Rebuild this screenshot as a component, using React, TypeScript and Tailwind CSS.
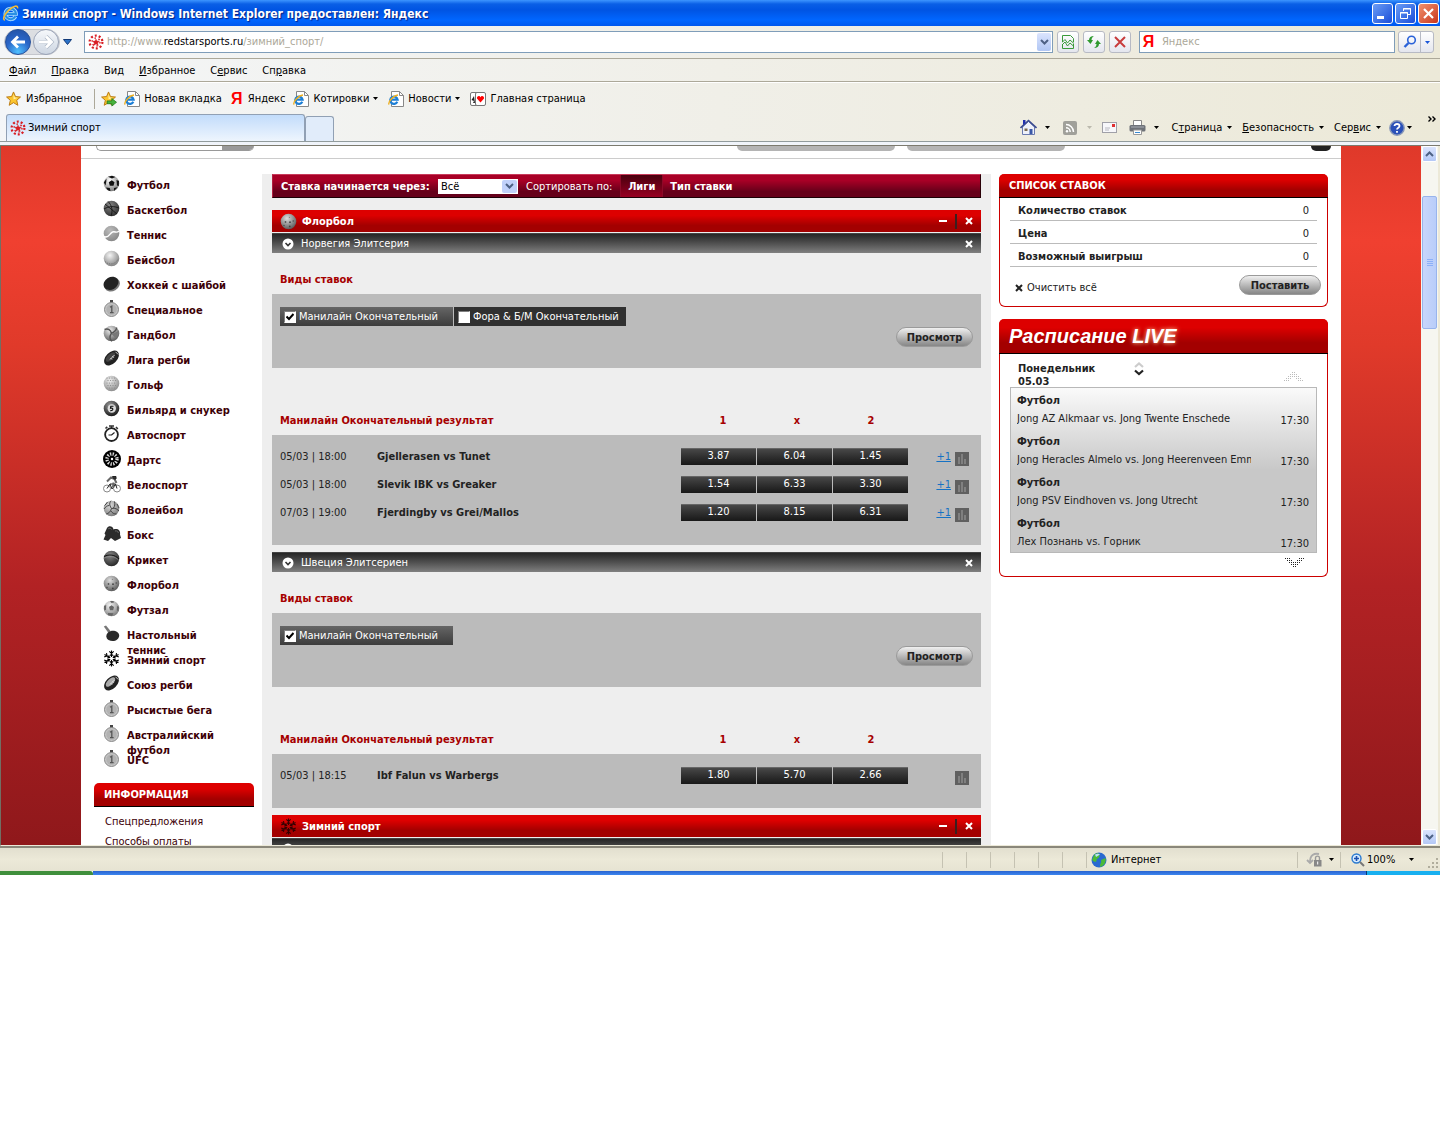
import React from "react";

const gid = (() => {
  let n = 0;
  return () => `g${n++}`;
})();

function Ball({ light, dark, children }: { light: string; dark: string; children?: React.ReactNode }) {
  const id = gid();
  return (
    <svg viewBox="0 0 17 17" className="size-[17px] shrink-0" aria-hidden="true">
      <defs>
        <radialGradient id={id} cx="0.4" cy="0.3" r="0.75">
          <stop offset="0" stopColor={light} />
          <stop offset="1" stopColor={dark} />
        </radialGradient>
      </defs>
      <circle cx="8.5" cy="8.5" r="7.8" fill={`url(#${id})`} />
      {children}
    </svg>
  );
}

function Medal() {
  return (
    <svg viewBox="0 0 17 17" className="size-[17px] shrink-0" aria-hidden="true">
      <rect x="7" y="0" width="3" height="4" fill="#444" />
      <circle cx="8.5" cy="9.5" r="7" fill="#c4c4c4" stroke="#8a8a8a" />
      <circle cx="8.5" cy="9.5" r="5.2" fill="#b2b2b2" />
      <path d="M7 7.2 L8.8 6.2 V12.5 M7 12.6 H10.6" stroke="#555" strokeWidth="1.3" fill="none" />
    </svg>
  );
}

function Snow({ color = "#000" }: { color?: string }) {
  return (
    <svg viewBox="0 0 17 17" className="size-[17px] shrink-0" aria-hidden="true" stroke={color} strokeWidth="1.1" fill="none">
      {[0, 60, 120, 180, 240, 300].map((a) => (
        <path key={a} transform={`rotate(${a} 8.5 8.5)`} d="M8.5 7 V0.4 M6.3 1.4 L8.5 3.4 L10.7 1.4 M7 4.6 L8.5 6 L10 4.6" />
      ))}
    </svg>
  );
}

function Rugby({ light }: { light: string }) {
  return (
    <svg viewBox="0 0 17 17" className="size-[17px] shrink-0" aria-hidden="true">
      <ellipse cx="8.5" cy="8" rx="8.8" ry="5.6" transform="rotate(-45 8.5 8)" fill="#222" />
      <ellipse cx="7.5" cy="7" rx="6" ry="3" transform="rotate(-45 7.5 7)" fill={light} />
      <path d="M7 9.5 L11.5 5 M7.5 8 L9 9.5 M9.3 6.2 L10.8 7.7 M12.5 1.8 L15.2 4.500" stroke="#ddd" strokeWidth="0.9" />
    </svg>
  );
}

function SportIcon({ kind }: { kind: string }) {
  switch (kind) {
    case "football":
      return (
        <Ball light="#fff" dark="#777">
          <path d="M5.800 7.200 L8.800 5.200 L11.500 7.300 L10.500 10.700 H6.800 Z M0.800 7.500 L3.500 3.500 L3.300 6.500 L2.500 10.500 Z M5 1.800 L9 0.700 L12.500 2 L9 3.400 Z M16 6 L13.500 5 L14 10.500 L15.800 11 Z M3 12.500 L6.800 13 L7.500 16.200 L4.600 15 Z M11 13 L14.500 12.300 L11 16 Z" fill="#111" />
        </Ball>
      );
    case "basketball":
      return (
        <Ball light="#888" dark="#2a2a2a">
          <path d="M2 4 L14 14 M5 1.5 C9 5 10 11 8 16 M1 9 C6 6 11 6 16 8" stroke="#151515" strokeWidth="0.9" fill="none" />
        </Ball>
      );
    case "tennis":
      return (
        <Ball light="#bbb" dark="#858585">
          <path d="M1 11.5 C6 14 6.5 8 9.5 7 C12 6 13.5 8.5 16 6" stroke="#fff" strokeWidth="1.4" fill="none" />
        </Ball>
      );
    case "baseball":
      return (
        <Ball light="#f4f4f4" dark="#7c7c7c">
          <path d="M2 11.5 C6 15.5 12 14.5 15 9.5" stroke="#777" strokeDasharray="1.3 1" fill="none" />
        </Ball>
      );
    case "puck":
      return (
        <svg viewBox="0 0 17 17" className="size-[17px] shrink-0" aria-hidden="true">
          <ellipse cx="9" cy="9.5" rx="8.2" ry="6.6" transform="rotate(-30 9 9.5)" fill="#777" />
          <ellipse cx="8" cy="8.3" rx="7.8" ry="6.2" transform="rotate(-30 8 8.3)" fill="#222" />
        </svg>
      );
    case "medal":
      return <Medal />;
    case "handball":
      return (
        <Ball light="#eee" dark="#555">
          <path d="M1.5 4.5 C5 3 8 5 8.3 8.5 C12 7 14 4 13.5 2.5 M8.3 8.5 C6 12 7 15 9 16.2" stroke="#555" strokeWidth="1.4" fill="none" />
          <path d="M8.5 9 L15.5 6 L13 13.5 Z" fill="#777" />
        </Ball>
      );
    case "rugby":
      return <Rugby light="#444" />;
    case "union":
      return <Rugby light="#aaa" />;
    case "golf":
      return (
        <Ball light="#eee" dark="#888">
          {[3, 5.5, 8, 10.5, 13].map((y, i) =>
            [4, 6.5, 9, 11.5].map((x) => <circle key={`${x}-${y}`} cx={x + (i % 2)} cy={y} r="0.6" fill="#8a8a8a" />)
          )}
        </Ball>
      );
    case "billiard":
      return (
        <Ball light="#999" dark="#111">
          <circle cx="8.8" cy="8.5" r="4.2" fill="#ddd" />
          <path d="M10.5 6.3 H7.8 L7.5 8.2 C10.5 7.5 10.8 11 7.3 10.6" stroke="#111" strokeWidth="1.1" fill="none" />
        </Ball>
      );
    case "watch":
      return (
        <svg viewBox="0 0 17 17" className="size-[17px] shrink-0" aria-hidden="true">
          <path d="M6 1 H11 M8.5 1 V3 M2.5 3.5 L4.3 1.8 M13 2 L14.8 4" stroke="#333" strokeWidth="1.6" />
          <circle cx="8.5" cy="9.6" r="6.4" fill="#fff" stroke="#222" strokeWidth="1.8" />
          <path d="M8.5 10 L11.5 7.5 M5.5 10 H8.5" stroke="#222" strokeWidth="1.1" />
        </svg>
      );
    case "darts":
      return (
        <svg viewBox="0 0 18 18" className="size-[18px] shrink-0" aria-hidden="true">
          <circle cx="9" cy="9" r="9" fill="#000" />
          <circle cx="9" cy="9" r="5" fill="none" stroke="#ddd" strokeWidth="3.400" strokeDasharray="1.300 1.320" />
          <circle cx="9" cy="9" r="1.2" fill="#fff" />
        </svg>
      );
    case "cycling":
      return (
        <svg viewBox="0 0 18 18" className="size-[18px] shrink-0" aria-hidden="true" fill="none" stroke="#222">
          <circle cx="4" cy="13.5" r="3.5" stroke="#888" />
          <circle cx="14" cy="13.5" r="3.5" stroke="#888" />
          <path d="M4 13.5 L7 9 H12.5 L14 13.5 M7 9 L9 14 L12.5 9" />
          <path d="M4 6.500 L8 2.500 L11.500 4 L13.500 8 M10.500 7.500 L10 12" stroke="#666" strokeWidth="2" />
          <path d="M9.500 1.500 H13 V4 H11 Z" fill="#333" />
        </svg>
      );
    case "volleyball":
      return (
        <Ball light="#ddd" dark="#777">
          <path d="M8.5 8.5 C6 5 6.5 2.5 8 0.8 M6.3 5.5 C4 5.5 2.5 7 1 9 M8.5 8.5 C12.5 7.5 14.5 9.5 16 11 M10.5 8 C12 6 12 4 11.5 1.5 M8.5 8.5 C7.5 12 5.5 13.5 3.2 14 M7.8 10.8 C9 13 11 14 13.5 14 M4.5 2 C3.5 3.5 2.8 4.5 1.5 5.5 M14 4 C15 6 15.5 7 16 8" stroke="#444" strokeWidth="1" fill="none" />
        </Ball>
      );
    case "boxing":
      return (
        <svg viewBox="0 0 18 17" className="size-[18px] shrink-0" aria-hidden="true">
          <path d="M4 2.500 C6 -0.5 10 1 10.5 4 C14 2.5 18 4.500 17 9 L18 12.500 L12 15.5 L8 12.5 L5 15.500 L0.500 14 L2.500 9.500 L1.500 8 Z" fill="#2b2b2b" />
          <path d="M5 3.500 C6 2.500 8 2.5 8.5 4 M12 5.5 C14 5 15.300 6 15.3 7.500" stroke="#666" fill="none" />
        </svg>
      );
    case "cricket":
      return (
        <Ball light="#888" dark="#222">
          <path d="M1 6.5 C6 4 12 4.5 16 9" stroke="#111" fill="none" />
          <path d="M1 8.2 C6 5.5 12 6 15.8 10.5" stroke="#999" strokeWidth="0.6" fill="none" />
        </Ball>
      );
    case "floorball":
      return (
        <Ball light="#ddd" dark="#555">
          <circle cx="5.5" cy="9" r="0.9" fill="#555" />
          <circle cx="10" cy="9.2" r="0.9" fill="#444" />
          <circle cx="13.2" cy="8" r="0.7" fill="#444" />
          <circle cx="9.5" cy="4.4" r="0.7" fill="#888" />
          <circle cx="4" cy="12.5" r="0.7" fill="#444" />
          <circle cx="9.8" cy="13.4" r="0.9" fill="#444" />
        </Ball>
      );
    case "futsal":
      return (
        <Ball light="#f5f5f5" dark="#777">
          <path d="M6 7 L8.5 5.3 L11 7 L10.2 10.2 H7 Z M1 6 L3.2 5 L3 9.8 L1.2 10.5 Z M7 1 L10.5 1 L11 2.5 L8.5 3 Z M16 7 L14 6 L13.8 10 L15.4 11.5 Z M5 13 L10.5 13.3 L9 16 L5 15 Z" fill="#666" />
        </Ball>
      );
    case "pingpong":
      return (
        <svg viewBox="0 0 17 17" className="size-[17px] shrink-0" aria-hidden="true">
          <path d="M0.8 1.5 L3 0.5 L7.5 6 L5.5 8 Z" fill="#777" />
          <path d="M5 7.5 C9 4 16 6 16.2 10.5 C16 15.5 10 17.5 5.5 15 C3 13.5 2.5 10 5 7.5 Z" fill="#2a2a2a" />
        </svg>
      );
    default:
      return <Snow />;
  }
}

const sports: [string, string][] = [
  ["Футбол", "football"],
  ["Баскетбол", "basketball"],
  ["Теннис", "tennis"],
  ["Бейсбол", "baseball"],
  ["Хоккей с шайбой", "puck"],
  ["Специальное", "medal"],
  ["Гандбол", "handball"],
  ["Лига регби", "rugby"],
  ["Гольф", "golf"],
  ["Бильярд и снукер", "billiard"],
  ["Автоспорт", "watch"],
  ["Дартс", "darts"],
  ["Велоспорт", "cycling"],
  ["Волейбол", "volleyball"],
  ["Бокс", "boxing"],
  ["Крикет", "cricket"],
  ["Флорбол", "floorball"],
  ["Футзал", "futsal"],
  ["Настольный теннис", "pingpong"],
  ["Зимний спорт", "snow"],
  ["Союз регби", "union"],
  ["Рысистые бега", "medal"],
  ["Австралийский футбол", "medal"],
  ["UFC", "medal"],
];

/* ---------- browser chrome ---------- */

function Caret({ className = "text-black" }: { className?: string }) {
  return (
    <svg viewBox="0 0 5 3" className={`h-[3px] w-[5px] shrink-0 ${className}`} aria-hidden="true">
      <path d="M0 0 H5 L2.5 3 Z" fill="currentColor" />
    </svg>
  );
}

function StarMark() {
  return (
    <svg viewBox="0 0 16 16" className="size-4 shrink-0" aria-hidden="true" fill="none" stroke="#d81e24">
      <circle cx="8" cy="8" r="6.4" strokeWidth="2.2" strokeDasharray="2 2.020" />
      <circle cx="8" cy="8" r="4" strokeWidth="1.4" strokeDasharray="1.5 2.7" />
      <path d="M8 5 L9 7 L11.500 7.200 L9.7 9 L10.300 11.500 L8 10 L5.700 11.500 L6.300 9 L4.500 7.200 L7 7 Z" fill="#d81e24" strokeWidth="0.3" />
    </svg>
  );
}

function IeGlyph({ className = "size-[18px]" }: { className?: string }) {
  return (
    <svg viewBox="0 0 18 18" className={`shrink-0 ${className}`} aria-hidden="true" fill="none">
      <path d="M14.2 12 A5.6 5.6 0 1 1 14.8 9.4 H4.5" stroke="#a8dcff" strokeWidth="4" />
      <path d="M14.2 12 A5.6 5.6 0 1 1 14.8 9.4 H4.5" stroke="#2a90e4" strokeWidth="2.2" />
      <path d="M3 16.2 C0 15 3 9.5 7.5 5.2 C12 1 17 -0.5 16.5 3.5" stroke="#f3bb35" strokeWidth="1.7" />
    </svg>
  );
}

function IePage() {
  return (
    <svg viewBox="0 0 16 16" className="size-4 shrink-0" aria-hidden="true" fill="none">
      <path d="M3.5 0.5 H11.5 L15.5 4.5 V15.5 H3.5 Z" fill="#fff" stroke="#888" />
      <path d="M11.5 0.5 V4.5 H15.5" stroke="#888" />
      <path d="M9.3 10.8 A3.7 3.7 0 1 1 9.6 8.6 H3" stroke="#1d7fd6" strokeWidth="2.2" />
      <path d="M1.2 13.5 C-0.5 11.5 5 4.5 10 4" stroke="#f0b020" strokeWidth="1.4" />
    </svg>
  );
}

function GoldStar({ arrow }: { arrow?: boolean }) {
  return (
    <svg viewBox="0 0 17 17" className="size-4 shrink-0" aria-hidden="true">
      <path d="M8 1 L10.1 5.9 L15.4 6.4 L11.4 9.9 L12.6 15.2 L8 12.4 L3.4 15.2 L4.6 9.9 L0.6 6.4 L5.9 5.9 Z" fill="#fbc52f" stroke="#b9780f" />
      <path d="M8 3 L9.3 6.8 L12.5 7.2 L8 9 Z" fill="#fff0a8" />
      {arrow && <path d="M6.5 10.5 H11.5 V8 L16.5 12 L11.5 16 V13.5 H6.5 Z" fill="#46b23c" stroke="#1c7a1c" strokeWidth="0.8" />}
    </svg>
  );
}

function Ya() {
  return <span aria-hidden="true" className="inline-block w-[14px] text-center font-['Liberation_Sans',sans-serif] text-base leading-4 font-bold text-[#f00]">Я</span>;
}

const iconBtn = "flex size-[22px] shrink-0 items-center justify-center rounded-[3px] border border-[#b7bac4] bg-linear-to-b from-white to-[#e4e6ee]";

function TitleBar() {
  const box = "flex size-[21px] items-center justify-center rounded-[3px] border border-white";
  return (
    <header className="flex h-[26px] items-center bg-[linear-gradient(#3d95ff_0,#0a5fe6_4px,#0054e3_10px,#0066ff_20px,#0058ee_100%)] pr-px pl-0.5">
      <IeGlyph className="size-[17px]" />
      <h1 className="ml-[3px] flex-1 pt-0.5 font-['DejaVu_Sans_Condensed',sans-serif] text-[12px] font-bold whitespace-nowrap text-white [text-shadow:1px_1px_1px_#0a1f80]">
        Зимний спорт - Windows Internet Explorer предоставлен: Яндекс
      </h1>
      <div className="flex gap-0.5">
        <button aria-label="Свернуть" className={`${box} bg-linear-to-br from-[#6b9cf5] to-[#1c4bd8]`}>
          <svg viewBox="0 0 19 19" className="size-[19px]"><path d="M4 12 H11 V15 H4 Z" fill="#fff" /></svg>
        </button>
        <button aria-label="Развернуть" className={`${box} bg-linear-to-br from-[#6b9cf5] to-[#1c4bd8]`}>
          <svg viewBox="0 0 19 19" className="size-[19px]" fill="none" stroke="#fff"><path d="M7.5 7 V4.5 H14.5 V10.5 H12 M7 5 H15 M4.5 8.5 H11.5 V14.5 H4.5 Z M4 9 H12" /></svg>
        </button>
        <button aria-label="Закрыть" className={`${box} bg-linear-to-br from-[#f0906c] to-[#c8321a]`}>
          <svg viewBox="0 0 19 19" className="size-[19px]" stroke="#fff" strokeWidth="2.2"><path d="M5 5 L14 14 M14 5 L5 14" /></svg>
        </button>
      </div>
    </header>
  );
}

function AddressBar() {
  return (
    <div className="flex h-[33px] items-center border-b border-[#aca899] pr-1.5 pl-1">
      <div className="flex h-[26px] w-[56px] shrink-0 items-center rounded-full border border-[#c4c6cc] bg-[#dcdee2]">
        <button aria-label="Назад" className="flex size-[26px] items-center justify-center rounded-full border border-[#24509c] bg-[radial-gradient(circle_at_50%_90%,#4fc0ff,#2a66c8_50%,#2450a0)]">
          <svg viewBox="0 0 18 18" className="size-[18px]" stroke="#fff" strokeWidth="2.8" fill="none"><path d="M16 9 H4 M9 3.5 L3.5 9 L9 14.5" /></svg>
        </button>
        <button aria-label="Вперёд" className="ml-0.5 flex size-[26px] items-center justify-center rounded-full border border-[#9aa4b8] bg-linear-to-b from-[#f6f8fb] to-[#cdd6e2]">
          <svg viewBox="0 0 18 18" className="size-[18px]" stroke="#fff" strokeWidth="2.8" fill="none"><path d="M2 9 H14 M9 3.5 L14.5 9 L9 14.5" stroke="#a9b4c4" strokeWidth="4" /><path d="M2 9 H14 M9 3.5 L14.5 9 L9 14.5" /></svg>
        </button>
      </div>
      <button aria-label="Последние страницы" className="ml-[3px] w-[9px]">
        <svg viewBox="0 0 9 6" className="h-1.5 w-[9px]"><path d="M0.5 0.5 H8.5 L4.5 5.5 Z" fill="#2a72c8" stroke="#123a78" /></svg>
      </button>
      <div className="ml-3 flex h-[22px] flex-1 items-center border border-[#7f9db9] bg-white pr-px pl-[3px]">
        <StarMark />
        <div role="textbox" aria-label="Адрес" className="ml-[3px] flex-1 text-[#aca899]">
          http://www.<span className="text-black">redstarsports.ru</span>/зимний_спорт/
        </div>
        <button aria-label="Показать адреса" className="flex h-[18px] w-[14px] items-center justify-center rounded-[2px] bg-linear-to-b from-[#dbe4fd] to-[#b0c6f4]">
          <svg viewBox="0 0 9 6" className="h-1.5 w-[9px]" fill="none" stroke="#4d6185" strokeWidth="2"><path d="M1 1 L4.5 4.5 L8 1" /></svg>
        </button>
      </div>
      <div className="ml-1 flex gap-1">
        <button aria-label="Просмотр совместимости" className={iconBtn}>
          <svg viewBox="0 0 12 14" className="h-[14px] w-3" fill="none" stroke="#3a9a3a"><path d="M0.5 7 V0.5 H8.5 L11.5 3.5 V7 M0.5 9 V13.5 H11.5 V9 M0 7.5 L3 4.5 L5.5 8 L8 5 L12 8.5 M0 10 L3 7 L5.5 11 L8 8 L12 11.5" /></svg>
        </button>
        <button aria-label="Обновить" className={iconBtn}>
          <svg viewBox="0 0 14 12" className="h-3 w-[14px]" fill="#2f9a2f"><path d="M0 4 L3.5 8 L6 4 H4.5 C4.5 2 5.5 1 7 0 C4 0 2 1.5 2 4 Z" /><path d="M14 8 L10.5 4 L8 8 H9.5 C9.5 10 8.5 11 7 12 C10 12 12 10.500 12 8 Z" /></svg>
        </button>
        <button aria-label="Остановить" className={iconBtn}>
          <svg viewBox="0 0 12 12" className="size-3" stroke="#c83c3c" strokeWidth="2"><path d="M1 1 L11 11 M11 1 L1 11" /></svg>
        </button>
      </div>
      <label className="ml-2 flex h-[22px] w-[256px] items-center border border-[#7f9db9] bg-white pl-0.5">
        <Ya />
        <input aria-label="Поиск" placeholder="Яндекс" className="ml-[7px] w-full bg-transparent outline-none placeholder:text-[#aca899]" />
      </label>
      <div className="ml-[3px] flex h-[22px] w-9 rounded-[3px] border border-[#b7bac4] bg-linear-to-b from-white to-[#e4e6ee]">
        <button aria-label="Найти" className="flex flex-1 items-center justify-center border-r border-[#b7bac4]">
          <svg viewBox="0 0 14 14" className="size-[14px]" fill="none" stroke="#2a62d8"><circle cx="8.500" cy="5" r="3.800" strokeWidth="1.600" /><path d="M5.500 8 L1.500 12" strokeWidth="2.400" /></svg>
        </button>
        <button aria-label="Варианты поиска" className="flex w-3 items-center justify-center"><Caret className="text-[#1a56d8]" /></button>
      </div>
    </div>
  );
}

const menus: [string, string, string][] = [
  ["", "Ф", "айл"],
  ["", "П", "равка"],
  ["Ви", "д", ""],
  ["", "И", "збранное"],
  ["С", "е", "рвис"],
  ["Сп", "р", "авка"],
];

function U({ parts }: { parts: [string, string, string] }) {
  return (
    <span className="whitespace-nowrap">
      {parts[0]}
      <span className="underline">{parts[1]}</span>
      {parts[2]}
    </span>
  );
}

function FavoritesBar() {
  const item = "flex items-center gap-1 whitespace-nowrap";
  return (
    <div className="flex h-8 items-center border-t border-white pl-1.5">
      <button className={item}><GoldStar />Избранное</button>
      <div className="ml-3 h-[20px] w-px bg-[#aca899]" />
      <button aria-label="Добавить в избранное" className="ml-1.5"><GoldStar arrow /></button>
      <div className="ml-[7px] flex items-center gap-2">
        <a href="#new" className={item}><IePage />Новая вкладка</a>
        <a href="#ya" className={item}><Ya />Яндекс</a>
        <button className={`${item} mr-0.5`}><IePage />Котировки<Caret /></button>
        <button className={`${item} mr-0.5`}><IePage />Новости<Caret /></button>
        <a href="#home" className={item}>
          <svg viewBox="0 0 16 14" className="h-[14px] w-4" aria-hidden="true">
            <rect x="0.500" y="0.500" width="9" height="13" rx="1.500" fill="#fff" stroke="#777" />
            <path d="M4 4 L1.500 8 L4 9 L3 11 H5 Z" fill="#222" />
            <rect x="5.500" y="0.500" width="10" height="13" rx="1.500" fill="#fff" stroke="#777" />
            <path d="M10.500 10.500 L7 6.500 C6.500 4 9.500 3 10.500 5.200 C11.500 3 14.500 4 14 6.500 Z" fill="#f00" />
          </svg>
          Главная страница
        </a>
      </div>
    </div>
  );
}

function TabRow() {
  return (
    <div className="flex h-7 items-end border-b border-[#919b9c] pr-1 pl-1.5">
      <button className="flex h-[27px] w-[299px] items-center gap-0.5 rounded-t-[3px] border border-b-0 border-[#91a0b4] bg-linear-to-b from-[#c2dcfb] to-[#eef5fd] pl-[3px] text-left">
        <StarMark />Зимний спорт
      </button>
      <button aria-label="Новая вкладка" className="h-[25px] w-[29px] rounded-t-[3px] border border-b-0 border-[#91a0b4] bg-[#e1ecfa]" />
      <div className="ml-auto flex h-[27px] items-center">
        <button aria-label="Домашняя страница" className="flex items-center gap-2">
          <svg viewBox="0 0 17 17" className="size-[17px]" fill="none"><path d="M2.500 8 V15.500 H14.500 V8 L8.500 2.500 Z" fill="#eef1fa" stroke="#6a7ab0" /><path d="M0.500 9 L8.500 1.500 L16.500 9" stroke="#3a4a90" strokeWidth="1.600" /><path d="M3 1 H5.500 V4 L3 6 Z" fill="#2030b0" /><path d="M9.500 10 H12.500 V15 H9.500 Z" fill="#3a58a8" /><path d="M4.500 9.500 H7.500 V12 H4.500 Z" fill="#7a6a50" /></svg>
          <Caret />
        </button>
        <button aria-label="Веб-каналы" className="ml-[13px] flex items-center gap-2.5">
          <svg viewBox="0 0 14 14" className="size-[14px]" fill="none"><rect width="14" height="14" rx="2" fill="#a0a09a" /><path d="M3 3.500 A7.500 7.500 0 0 1 10.500 11 M3 6.800 A4.200 4.200 0 0 1 7.200 11" stroke="#fff" strokeWidth="1.500" /><circle cx="4" cy="10.200" r="1.200" fill="#fff" /></svg>
          <Caret className="text-[#bbb9ad]" />
        </button>
        <button aria-label="Почта" className="ml-2.5">
          <svg viewBox="0 0 15 11" className="h-[11px] w-[15px]"><rect x="0.500" y="0.500" width="14" height="10" fill="#f7f7fa" stroke="#a0a0a8" /><path d="M10 2 H13 V5 H10 Z" fill="#e03030" /><path d="M3 6 H8 M3 8 H7" stroke="#b8b8c0" /></svg>
        </button>
        <button aria-label="Печать" className="ml-3 flex items-center gap-2">
          <svg viewBox="0 0 17 15" className="h-[15px] w-[17px]"><path d="M4.500 0.500 H12.500 V6 H4.500 Z" fill="#fff" stroke="#888" /><rect x="0.500" y="5" width="16" height="6.500" rx="1.500" fill="#6e7278" /><path d="M2 7 H15" stroke="#a8acb4" /><path d="M4.500 10 H12.500 V14.500 H4.500 Z" fill="#fff" stroke="#999" /><path d="M6 12.500 H11" stroke="#3a8ad0" /></svg>
          <Caret />
        </button>
        <button className="ml-3 flex items-center gap-[5px]"><U parts={["С", "т", "раница"]} /><Caret /></button>
        <button className="ml-2.5 flex items-center gap-[5px]"><U parts={["", "Б", "езопасность"]} /><Caret /></button>
        <button className="ml-2.5 flex items-center gap-[5px]"><U parts={["Сер", "в", "ис"]} /><Caret /></button>
        <button aria-label="Справка" className="ml-2 flex items-center gap-0.5">
          <svg viewBox="0 0 16 16" className="size-4" fill="none"><circle cx="8" cy="8" r="7.200" fill="#2a50b8" stroke="#8898b8" strokeWidth="1.400" /><path d="M5.500 6 C5.500 3.300 10.500 3.300 10.500 6 C10.500 7.800 8 7.600 8 9.600 M8 11 V12.800" stroke="#fff" strokeWidth="1.800" /></svg>
          <Caret />
        </button>
        <button aria-label="Ещё" className="ml-4 flex self-start pt-0.5">
          <svg viewBox="0 0 8 6" className="h-1.5 w-2" fill="none" stroke="#000" strokeWidth="1.400"><path d="M0.500 0.500 L3 3 L0.500 5.500 M4.500 0.500 L7 3 L4.500 5.500" /></svg>
        </button>
      </div>
    </div>
  );
}

/* ---------- page ---------- */

const redHead = "bg-[linear-gradient(#dd0000_25%,#a30000_70%)]";

function CloseX({ color = "#fff" }: { color?: string }) {
  return (
    <svg viewBox="0 0 8 8" className="size-2" aria-hidden="true" stroke={color} strokeWidth="2"><path d="M1 1 L7 7 M7 1 L1 7" /></svg>
  );
}

function Pill({ children, className }: { children: string; className: string }) {
  return (
    <button className={`h-5 rounded-full border border-[#9a9a9a] bg-linear-to-b from-[#f0f0f0] to-[#868686] pt-0.5 text-center leading-4 font-bold text-[#222] ${className}`}>
      {children}
    </button>
  );
}

function SportHeader({ icon, name }: { icon: React.ReactNode; name: string }) {
  return (
    <div className={`flex h-[22px] items-center pr-2 pl-2 text-white ${redHead}`}>
      {icon}
      <h2 className="ml-[5px] flex-1 pt-0.5 font-bold">{name}</h2>
      <button aria-label={`Свернуть ${name}`} className="h-0.5 w-2 bg-white" />
      <div className="mx-2 h-[15px] w-0.5 bg-[#3a2020]" />
      <button aria-label={`Закрыть ${name}`}><CloseX /></button>
    </div>
  );
}

function LeagueHeader({ name }: { name?: string }) {
  return (
    <div className="flex h-5 items-center border-t border-[#444] bg-linear-to-b from-[#262626] to-[#808080] px-2 text-white">
      <svg viewBox="0 0 16 16" className="size-4" aria-hidden="true"><circle cx="8" cy="8" r="5.500" fill="#fff" /><path d="M5.500 7 L8 9.500 L10.500 7" stroke="#333" strokeWidth="1.600" fill="none" /></svg>
      <h3 className="ml-[5px] flex-1 pt-px">{name}</h3>
      <button aria-label={`Закрыть ${name ?? "лигу"}`}><CloseX /></button>
    </div>
  );
}

function Chip({ label, checked, className }: { label: string; checked?: boolean; className: string }) {
  return (
    <label className={`flex h-[19px] items-center gap-[3px] pl-1 whitespace-nowrap text-white ${className}`}>
      <span className="relative grid size-3 place-items-center">
        <input type="checkbox" defaultChecked={checked} className="peer size-3 appearance-none border border-[#808080] border-r-white border-b-white bg-white" />
        <svg viewBox="0 0 8 8" className="pointer-events-none absolute size-2 opacity-0 peer-checked:opacity-100" fill="none" stroke="#000" strokeWidth="2"><path d="M0.500 3.500 L3 6 L7.500 1" /></svg>
      </span>
      {label}
    </label>
  );
}

type Match = { date: string; name: string; odds: string[]; more?: boolean };

function League({ name, types, matches }: { name: string; types: string[]; matches: Match[] }) {
  return (
    <section>
      <LeagueHeader name={name} />
      <h4 className="h-[41px] pt-[19px] pl-2 leading-4 font-bold text-[#a60000]">Виды ставок</h4>
      <div className="h-[74px] bg-[#bbb] px-2 pt-[13px]">
        <div className="flex gap-px">
          {types.map((t, i) => (
            <Chip key={t} label={t} checked={i === 0} className={i === 0 ? "w-[173px] bg-linear-to-b from-[#666] to-[#3c3c3c]" : "w-[172px] bg-[#303030]"} />
          ))}
        </div>
        <div className="mt-px flex justify-end">
          <Pill className="w-[77px]">Просмотр</Pill>
        </div>
      </div>
      <div className="flex h-[67px] items-end pr-[73px] pb-1.5 pl-2 leading-4 font-bold text-[#a60000]">
        <h4 className="flex-1">Манилайн Окончательный результат</h4>
        <span className="w-[74px] text-center">1</span>
        <span className="w-[74px] text-center">x</span>
        <span className="w-[74px] text-center">2</span>
      </div>
      <div className="mb-[7px] bg-[#bbb] py-[13px] pl-2">
        <table className="w-full table-fixed border-collapse" aria-label={name}>
          <tbody>
            {matches.map((m) => (
              <tr key={m.name} className="h-7 align-top">
                <td className="w-[97px] px-0 pt-px pb-0 leading-4">{m.date}</td>
                <th scope="row" className="px-0 pt-px pb-0 text-left leading-4 font-bold">{m.name}</th>
                {m.odds.map((o) => (
                  <td key={o} className="w-[76px] p-0">
                    <button className="block h-[17px] w-[calc(100%-1px)] border-t border-[#666] bg-linear-to-b from-[#484848] to-[#181818] pb-0.5 text-center leading-[14px] text-white">{o}</button>
                  </td>
                ))}
                <td className="w-[72px] p-0">
                  <div className="flex items-start justify-end gap-1 pr-3">
                    {m.more && <a href="#more" className="pt-px leading-4 text-[#1672c4] underline">+1</a>}
                    <button aria-label="Статистика" className="mt-1 size-[14px]">
                      <svg viewBox="0 0 14 14" className="size-[14px]"><rect width="14" height="14" fill="#606060" /><path d="M3 5 H5 V12 H3 Z M6 2 H8 V12 H6 Z M9 7 H11 V12 H9 Z" fill="#808080" /></svg>
                    </button>
                  </div>
                </td>
              </tr>
            ))}
          </tbody>
        </table>
      </div>
    </section>
  );
}

function Sidebar() {
  return (
    <aside className="w-[160px] shrink-0 pt-[13px] text-[#3c0006]">
      <nav>
        {sports.map(([name, kind]) => (
          <a key={name} href="#sport" className="flex h-[25px] items-start gap-[7px] pl-[9px] font-bold">
            <span className="mt-[3px] w-[17px]"><SportIcon kind={kind} /></span>
            <span className="mt-1.5 w-[110px] leading-[15px]">{name}</span>
          </a>
        ))}
      </nav>
      <h2 className={`mt-[11px] h-6 rounded-t-[5px] border-b border-black pl-2.5 leading-[23px] font-bold text-white ${redHead}`}>ИНФОРМАЦИЯ</h2>
      <div className="flex flex-col pt-[5px] pl-[11px] leading-5">
        <a href="#offers">Спецпредложения</a>
        <a href="#payment">Способы оплаты</a>
      </div>
    </aside>
  );
}

function FilterBar() {
  return (
    <div className="flex h-6 items-center border border-t-[#c83a5a] border-r-[#2a0008] border-b-[#1c0006] border-l-[#b02040] bg-[linear-gradient(#a80026_25%,#66001a_75%)] pl-2 whitespace-nowrap text-white">
      <label htmlFor="start" className="w-[153px] pt-px font-bold">Ставка начинается через:</label>
      <div className="relative ml-1">
        <select id="start" className="block h-[15px] w-20 appearance-none bg-white pl-[3px] leading-[15px] text-black">
          <option>Всё</option>
        </select>
        <span className="pointer-events-none absolute top-px right-px flex h-[13px] w-[15px] items-center justify-center rounded-[2px] bg-[#c1d1fa]">
          <svg viewBox="0 0 9 6" className="h-1.5 w-[9px]" fill="none" stroke="#4d6185" strokeWidth="2"><path d="M1 1 L4.500 4.500 L8 1" /></svg>
        </span>
      </div>
      <span className="ml-2 pt-px">Сортировать по:</span>
      <button className="ml-2 h-[22px] w-[43px] border-x border-[#8c0a28] bg-linear-to-b from-[#4a000e] to-[#980022] pt-px font-bold">Лиги</button>
      <button className="ml-[7px] pt-px font-bold">Тип ставки</button>
    </div>
  );
}

function Chevrons({ down }: { down?: boolean }) {
  const rows = [2, 4, 6, 6, 6];
  return (
    <svg viewBox="0 0 20 10" className={`h-2.5 w-5 ${down ? "rotate-180" : ""}`} aria-hidden="true">
      {rows.map((n, r) =>
        Array.from({ length: n }, (_, i) => {
          const spread = r < 3 ? 0 : (r - 2) * 2;
          const x = 10 - n + i * 2 + (i < n / 2 ? -spread : spread);
          return <rect key={`${r}-${i}`} x={x} y={r * 2} width="1" height="1" fill={down ? "#222" : "#bbb"} />;
        })
      )}
    </svg>
  );
}

function BetSlip() {
  return (
    <section className="rounded-[6px] border border-t-0 border-[#cc0000]">
      <h2 className={`-mx-px h-6 rounded-t-[5px] border-b border-black pl-2.5 leading-6 font-bold text-white ${redHead}`}>СПИСОК СТАВОК</h2>
      <dl className="mx-2.5">
        {["Количество ставок", "Цена", "Возможный выигрыш"].map((t) => (
          <div key={t} className="flex h-[23px] items-center justify-between border-b border-[#bbb] px-2 pt-[3px]">
            <dt className="font-bold">{t}</dt>
            <dd>0</dd>
          </div>
        ))}
      </dl>
      <div className="flex items-start justify-between pt-2 pr-1.5 pb-2.5 pl-[15px]">
        <button className="mt-[5px] flex items-center gap-1 leading-4"><CloseX color="#222" />Очистить всё</button>
        <Pill className="w-[82px]">Поставить</Pill>
      </div>
    </section>
  );
}

function LiveSchedule() {
  return (
    <section className="mt-3 rounded-[6px] border border-t-0 border-[#cc0000]">
      <h2 className={`-mx-px h-[35px] rounded-t-[5px] border-b border-black pl-2.5 font-['Liberation_Sans',sans-serif] text-[20px] leading-[34px] font-bold whitespace-nowrap text-white italic ${redHead}`}>
        Расписание <span className="[text-shadow:0_0_4px_#ffd9a0]">LIVE</span>
      </h2>
      <div className="flex h-[33px] items-start pt-2 pr-[23px] pl-[18px] leading-[13px]">
        <strong className="w-[116px]">Понедельник<br />05.03</strong>
        <svg viewBox="0 0 10 14" className="h-[14px] w-2.5" aria-hidden="true" fill="none" strokeWidth="2.200"><path d="M1 5 L5 1.500 L9 5" stroke="#ccc" /><path d="M1 8.500 L5 12 L9 8.500" stroke="#222" /></svg>
        <button aria-label="Вверх" className="mt-2.5 ml-auto"><Chevrons /></button>
      </div>
      <ul className="mx-2.5 border border-[#b8b8b8] bg-[linear-gradient(#fafafa,#c8c8c8_50%)]">
        {["Jong AZ Alkmaar vs. Jong Twente Enschede", "Jong Heracles Almelo vs. Jong Heerenveen Emmen", "Jong PSV Eindhoven vs. Jong Utrecht", "Лех Познань vs. Горник"].map((t) => (
          <li key={t} className="h-[41px] pt-[5px] pr-[7px] pl-1.5 leading-4">
            <strong className="block">Футбол</strong>
            <div className="flex items-start justify-between pt-0.5">
              <span className="w-[234px] overflow-hidden whitespace-nowrap">{t}</span>
              <span className="mt-0.5">17:30</span>
            </div>
          </li>
        ))}
      </ul>
      <div className="flex h-[23px] items-start justify-end pt-1 pr-[23px]"><button aria-label="Вниз" className="flex"><Chevrons down /></button></div>
    </section>
  );
}

function ScrollBar() {
  const btn = "flex h-4 w-[15px] items-center justify-center rounded-[2px] border border-white bg-linear-to-b from-[#dbe4fd] to-[#b4c8f6]";
  return (
    <div className="flex w-[19px] shrink-0 flex-col border-r-2 border-[#ece9d8] bg-[#f6f6f0] pl-px">
      <button aria-label="Прокрутить вверх" className={btn}>
        <svg viewBox="0 0 9 6" className="h-1.5 w-[9px]" fill="none" stroke="#4d6185" strokeWidth="2"><path d="M1 5 L4.500 1.500 L8 5" /></svg>
      </button>
      <div className="mt-[34px] flex h-[133px] w-[15px] flex-col items-center justify-center gap-px rounded-[2px] border border-[#98b4ec] bg-linear-to-r from-[#c8d6fb] to-[#b9cdf9]">
        <i className="h-px w-1.5 bg-[#8cb0f8]" /><i className="h-px w-1.5 bg-[#8cb0f8]" /><i className="h-px w-1.5 bg-[#8cb0f8]" /><i className="h-px w-1.5 bg-[#8cb0f8]" />
      </div>
      <button aria-label="Прокрутить вниз" className={`mt-auto ${btn}`}>
        <svg viewBox="0 0 9 6" className="h-1.5 w-[9px]" fill="none" stroke="#4d6185" strokeWidth="2"><path d="M1 1 L4.500 4.500 L8 1" /></svg>
      </button>
    </div>
  );
}

function StatusBar() {
  return (
    <footer>
      <div className="flex h-[25px] items-center border-t-2 border-[#8a877a] bg-linear-to-b from-[#e2dfcf] via-[#ece9d8] to-[#e6e3d2]">
        <div className="ml-auto flex">
          {[0, 1, 2, 3, 4, 5].map((i) => (
            <div key={i} className="h-4 w-6 border-l border-[#c5c2b2]" />
          ))}
        </div>
        <div className="flex h-4 w-[211px] items-center gap-1 border-l border-[#c5c2b2] pl-1">
          <svg viewBox="0 0 16 16" className="size-4" aria-hidden="true"><circle cx="8" cy="8" r="7.500" fill="#2a6ad0" /><path d="M3 3 C6 0 9 1 8.500 4 C8 7 5 6 5.500 9 C5 11 2 9 1 8 Z M10 8 L14.500 6 C15.500 10 13 14 9.500 15 C8 12 11 11 10 8 Z" fill="#4cba38" /><path d="M4 2.500 C6 1.500 8 1.500 9 2.500 L5 5 Z" fill="#b8e0f8" /></svg>
          Интернет
        </div>
        <div className="flex h-4 w-[43px] items-center gap-1.5 border-l border-[#c5c2b2] pl-2">
          <svg viewBox="0 0 17 15" className="h-[15px] w-[17px]" aria-hidden="true" fill="none"><path d="M1 8 L4 11 L7 8 M4 10 C4 3 8 1 13 2" stroke="#aaa" strokeWidth="1.800" /><path d="M9.500 8 V6 C9.500 3.500 13.500 3.500 13.500 6 V8" stroke="#999" strokeWidth="1.400" /><rect x="8" y="8" width="7.500" height="6.500" fill="#888" /><path d="M11.700 9.500 V12.500" stroke="#fff" /></svg>
          <Caret />
        </div>
        <div className="flex h-4 w-[100px] items-center gap-0.5 border-l border-[#c5c2b2] pl-2.5">
          <svg viewBox="0 0 14 14" className="size-[14px]" aria-hidden="true" fill="none"><circle cx="5.500" cy="5.500" r="4.500" fill="#d8ecff" stroke="#2a7ad0" strokeWidth="1.400" /><path d="M5.500 3 V8 M3 5.500 H8" stroke="#1a50b0" strokeWidth="1.600" /><path d="M9 9 L13 13" stroke="#777" strokeWidth="2" /></svg>
          100%
          <span className="ml-3"><Caret /></span>
          <svg viewBox="0 0 12 12" className="mt-1.5 mr-px ml-auto size-3" aria-hidden="true" fill="#b0ad9c"><path d="M9 1 H11 V3 H9 Z M9 5 H11 V7 H9 Z M9 9 H11 V11 H9 Z M5 5 H7 V7 H5 Z M5 9 H7 V11 H5 Z M1 9 H3 V11 H1 Z" /></svg>
        </div>
      </div>
      <div className="flex h-1">
        <div className="w-[93px] rounded-tr-[3px] bg-[#3f8f3c]" />
        <div className="flex-1 bg-linear-to-b from-[#2a64d0] to-[#3d86ee]" />
        <div className="w-[74px] border-l border-[#0a3a70] bg-[#18b0f0]" />
      </div>
    </footer>
  );
}

export default function App() {
  return (
    <div className="min-h-screen bg-white font-['DejaVu_Sans_Condensed','DejaVu_Sans',sans-serif] text-[11px] leading-4 text-black">
      <TitleBar />
      <div className="bg-linear-to-r from-[#f4f6f8] via-[#f0efe8] to-[#ece9d8]">
        <AddressBar />
        <nav className="mt-px flex h-[22px] items-center gap-[15px] border-b border-[#aca899] pl-[9px]">
          {menus.map((m) => (
            <button key={m.join("")}><U parts={m} /></button>
          ))}
        </nav>
        <FavoritesBar />
        <TabRow />
        <div className="h-1 border-b border-[#7c7a6e] bg-[#f0f4fa]" />
      </div>
      <div className="flex h-[700px] border-b border-l border-b-[#ece9d8] border-l-[#716f64]">
        <div className="flex flex-1 justify-center overflow-hidden bg-[linear-gradient(#df392a_0,#f04030_95px,#e03a2a_200px,#b22224_440px,#8f181b_700px)]">
          <main className="w-[1260px] bg-white text-[#222]">
            <div className="flex h-[13px] items-start border-b border-[#ccc] pl-[15px]">
              <div className="flex h-[5px] w-[158px] justify-end overflow-hidden rounded-b-[8px] border-b border-l border-[#999]"><div className="w-8 bg-[#999]" /></div>
              <div className="mr-3 ml-auto h-[5px] w-[158px] rounded-b-[8px] bg-[#b4b4b4]" />
              <div className="h-[5px] w-[158px] rounded-b-[8px] bg-[#b4b4b4]" />
              <div className="mr-2.5 ml-[246px] h-[5px] w-[20px] rounded-b-[10px] bg-[#222]" />
            </div>
            <div className="flex gap-2 px-[13px]">
              <Sidebar />
              <div className="mt-[15px] min-w-0 flex-1 bg-[#eee] px-2.5">
                <FilterBar />
                <div className="mt-3 mb-px">
                  <SportHeader icon={<SportIcon kind="floorball" />} name="Флорбол" />
                </div>
                <League
                  name="Норвегия Элитсерия"
                  types={["Манилайн Окончательный", "Фора & Б/М Окончательный"]}
                  matches={[
                    { date: "05/03 | 18:00", name: "Gjellerasen vs Tunet", odds: ["3.87", "6.04", "1.45"], more: true },
                    { date: "05/03 | 18:00", name: "Slevik IBK vs Greaker", odds: ["1.54", "6.33", "3.30"], more: true },
                    { date: "07/03 | 19:00", name: "Fjerdingby vs Grei/Mallos", odds: ["1.20", "8.15", "6.31"], more: true },
                  ]}
                />
                <League
                  name="Швеция Элитсериен"
                  types={["Манилайн Окончательный"]}
                  matches={[{ date: "05/03 | 18:15", name: "Ibf Falun vs Warbergs", odds: ["1.80", "5.70", "2.66"] }]}
                />
                <div className="mb-px">
                  <SportHeader icon={<Snow color="#300" />} name="Зимний спорт" />
                </div>
                <LeagueHeader />
              </div>
              <aside className="w-[329px] shrink-0 pt-[15px]">
                <BetSlip />
                <LiveSchedule />
              </aside>
            </div>
          </main>
        </div>
        <ScrollBar />
      </div>
      <StatusBar />
    </div>
  );
}
